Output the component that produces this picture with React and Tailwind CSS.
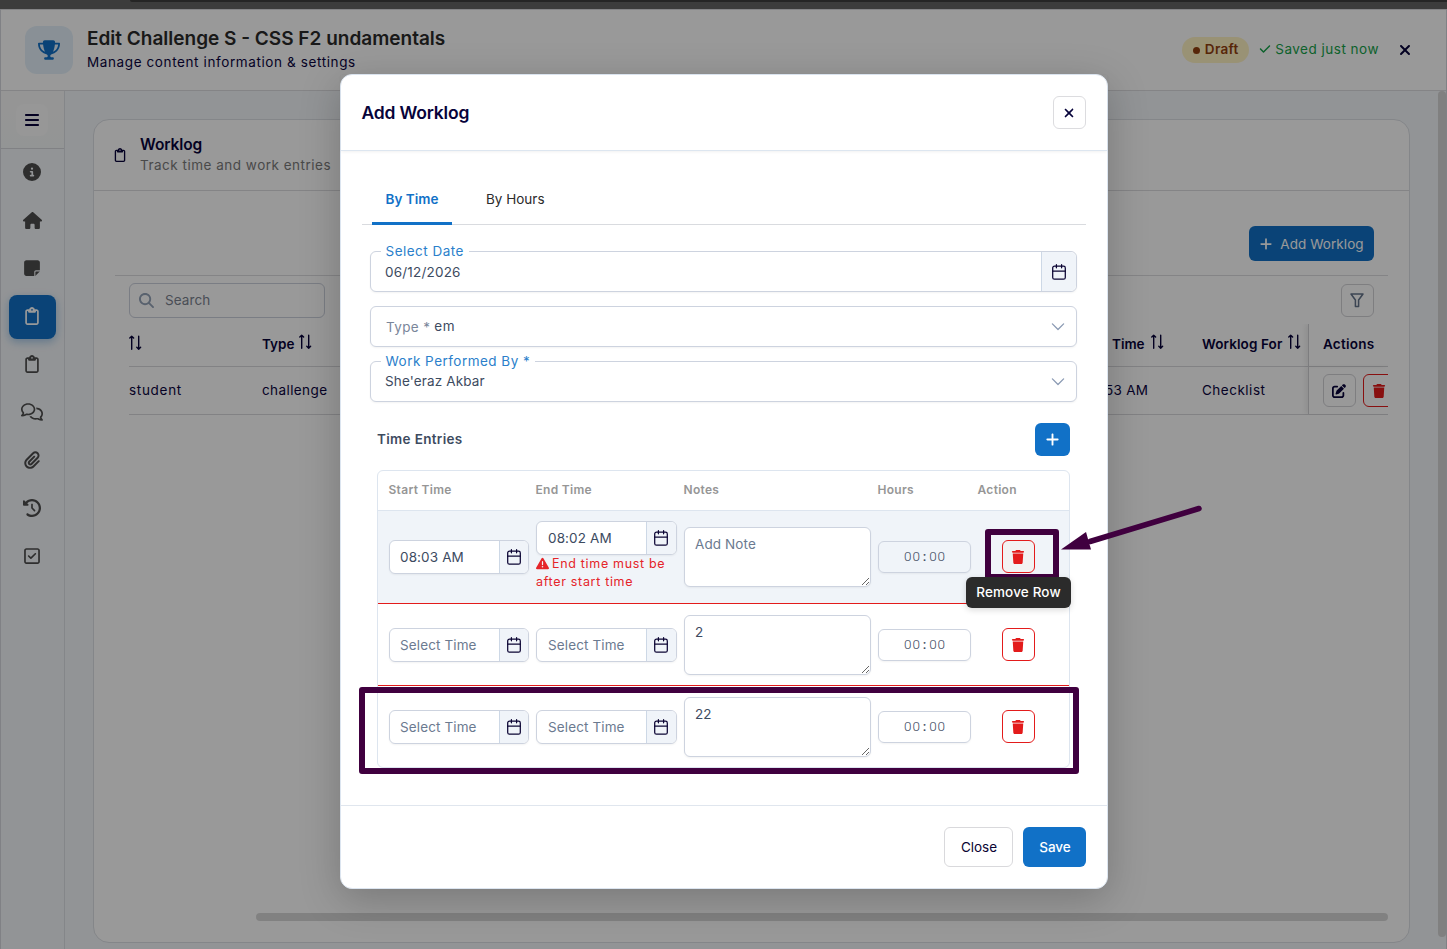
import React from "react";
import {
  FaTrophy, FaBars, FaCircleInfo, FaHouse, FaNoteSticky, FaRegClipboard, FaRegComments, FaPaperclip,
  FaClockRotateLeft, FaRegSquareCheck, FaMagnifyingGlass, FaXmark, FaPlus, FaCheck, FaPenToSquare,
  FaTrash, FaTriangleExclamation,
} from "react-icons/fa6";

function SortIcon({ className = "" }) {
  return (
    <svg className={className} width="14" height="16" viewBox="0 0 14 16" fill="none" stroke="currentColor" strokeWidth="1.4" strokeLinecap="round" strokeLinejoin="round">
      <path d="M2.7 14.2V1.2M0.8 3.1L2.7 1.2L4.6 3.1M9.7 1.2V14.2M7.8 12.3L9.7 14.2L11.6 12.3" />
    </svg>
  );
}

function CalendarIcon() {
  return (
    <svg width="14" height="16" viewBox="0 0 14 16" fill="none" stroke="#0b0433" strokeWidth="1.25" strokeLinecap="round" strokeLinejoin="round">
      <rect x="0.7" y="2.2" width="12.6" height="13" rx="1.8" />
      <path d="M0.7 7H13.3M4.4 0.7V3.8M9.6 0.7V3.8" />
    </svg>
  );
}

function Chevron() {
  return (
    <svg width="14" height="9" viewBox="0 0 14 9" fill="none" stroke="#8a9ab3" strokeWidth="1.3" strokeLinecap="round" strokeLinejoin="round">
      <path d="M1.4 1.9L7 7.5L12.6 1.9" />
    </svg>
  );
}

function FilterIcon() {
  return (
    <svg className="mr-px" width="14" height="15" viewBox="0 0 14 15" fill="none" stroke="#64748b" strokeWidth="1.5" strokeLinejoin="round">
      <path d="M1 1H13L8.6 7V13.6H5.4V7Z" />
    </svg>
  );
}

const navItems = [
  { icon: FaCircleInfo, size: 18 },
  { icon: FaHouse, size: 19 },
  { icon: FaNoteSticky, size: 18 },
  { icon: FaRegClipboard, size: 18, active: true },
  { icon: FaRegClipboard, size: 18 },
  { icon: FaRegComments, size: 22 },
  { icon: FaPaperclip, size: 18 },
  { icon: FaClockRotateLeft, size: 18 },
  { icon: FaRegSquareCheck, size: 18 },
];

function Sidebar() {
  return (
    <aside className="flex w-16 shrink-0 flex-col border-r border-[#dcdfe5]">
      <div className="flex h-[58px] items-center justify-center border-b border-[#d6d8dc] bg-linear-to-b from-[#f9f9f9] to-[#f6f9f8] pr-px">
        <div className="flex size-8 items-center justify-center rounded-lg bg-[#fcfcfc]">
          <FaBars size={16} color="#07033a" />
        </div>
      </div>
      <nav className="flex flex-col items-center gap-1 pt-[2px]">
        {navItems.map(({ icon: Icon, size, active }, i) => (
          <div
            key={i}
            className={
              active
                ? "flex h-11 w-[47px] items-center justify-center rounded-lg bg-[#1171c7] pr-px pb-[2px] text-white shadow-[0_3px_8px_rgba(17,113,199,0.35)]"
                : "flex h-11 w-[47px] items-center justify-center pr-px pb-[2px] text-[#4d4d4d]"
            }
          >
            <Icon size={size} />
          </div>
        ))}
      </nav>
    </aside>
  );
}

function Header() {
  return (
    <header className="flex h-[82px] shrink-0 items-center border-y border-[#dcdcdf] bg-white pr-[33px] pl-6">
      <div className="flex size-12 items-center justify-center rounded-xl bg-[#e4f1fb] pb-px">
        <FaTrophy size={22} color="#1171c7" />
      </div>
      <div className="ml-[14px] whitespace-nowrap">
        <h1 className="text-[19px] leading-[23px] font-semibold text-[#2b2b2b]">Edit Challenge S - CSS F2 undamentals</h1>
        <p className="text-[13.5px] leading-6 tracking-[0.61px] text-[#0b0440]">Manage content information &amp; settings</p>
      </div>
      <div className="ml-auto flex items-center whitespace-nowrap">
        <span className="flex h-[26px] w-[67px] items-center justify-center gap-[5px] rounded-full bg-[#fff3c4] pb-px text-[13.5px] font-semibold tracking-[0.3px] text-[#92400e]">
          <span className="mt-[2px] size-[7px] rounded-full bg-[#92400e]" />
          Draft
        </span>
        <span className="ml-[10px] flex items-center gap-1 pb-[2px] text-[13.5px] tracking-[0.5px] text-[#16a34a]">
          <FaCheck size={12} />
          Saved just now
        </span>
        <FaXmark className="ml-[18px]" size={16} color="#07033a" />
      </div>
    </header>
  );
}

function WorklogCard() {
  return (
    <section className="mt-7 ml-7 flex h-[824px] w-[1317px] flex-col rounded-2xl border border-[#dcdfe5] bg-white text-[13.5px]">
      <div className="flex h-[71px] items-center border-b border-[#dcdcdf] pl-[19px] whitespace-nowrap">
        <FaRegClipboard size={14} color="#07033a" />
        <div className="ml-[13px]">
          <h2 className="text-[15.5px] leading-5 font-semibold tracking-[-0.1px] text-[#07033a]">Worklog</h2>
          <p className="leading-[21px] tracking-[0.5px] text-[#7b7b7b]">Track time and work entries</p>
        </div>
      </div>
      <div className="mx-[21px] flex h-[85px] items-end justify-end border-b border-[#dcdcdf] pr-[14px] pb-[14px]">
        <button className="flex h-[35px] w-[125px] items-center justify-center gap-[7px] rounded-md bg-[#1171c7] pt-px tracking-[0.05px] whitespace-nowrap text-white">
          <FaPlus size={14} />
          Add Worklog
        </button>
      </div>
      <div className="mt-[7px] mr-[35px] ml-[35px] flex items-center justify-between">
        <div className="flex h-[35px] w-[196px] items-center gap-[11px] rounded-md border border-[#cbd0dc] pl-[9px] tracking-[0.1px] text-[#7b8290]">
          <FaMagnifyingGlass size={15} color="#94a3b8" />
          Search
        </div>
        <button className="flex size-[33px] items-center justify-center rounded-md border border-[#d2d2d6]">
          <FilterIcon />
        </button>
      </div>
      <div className="mt-[6px] mr-[21px] ml-[35px] overflow-hidden whitespace-nowrap text-[#0b0440]">
        <div className="grid h-[43px] grid-cols-[133px_843px_97px_106px_1fr] border-b border-[#d9d9dc] font-semibold text-[#07033a]">
          <div className="flex items-center pb-[5px]"><SortIcon /></div>
          <div className="flex items-center gap-[5px] pb-[2px]">Type <SortIcon className="-mt-[4px]" /></div>
          <div className="flex items-center gap-[6px] pb-[2px] pl-[7px]">Time <SortIcon className="-mt-[4px]" /></div>
          <div className="flex items-center gap-[6px] pb-[2px] tracking-[0.1px]">Worklog For <SortIcon className="-mt-[4px]" /></div>
          <div className="flex items-center border-l border-[#d0d0d4] pb-[2px] pl-[14px] tracking-[0.25px] shadow-[-3px_0_4px_rgba(0,0,0,0.06)]">Actions</div>
        </div>
        <div className="grid h-12 grid-cols-[133px_843px_97px_106px_1fr] border-b border-[#d9d9dc] tracking-[0.5px]">
          <div className="flex items-center tracking-[0.7px]">student</div>
          <div className="flex items-center tracking-[0.4px]">challenge</div>
          <div className="flex items-center tracking-[0.3px]">53 AM</div>
          <div className="flex items-center">Checklist</div>
          <div className="flex items-center gap-[7px] border-l border-[#d0d0d4] pl-[14px] shadow-[-3px_0_4px_rgba(0,0,0,0.06)]">
            <span className="flex size-[33px] shrink-0 items-center justify-center rounded-md border border-[#d2d2d6] pr-px">
              <FaPenToSquare size={14} color="#07033a" />
            </span>
            <span className="flex size-[33px] shrink-0 items-center justify-center rounded-md border border-[#e31b1b] pr-px">
              <FaTrash size={14} color="#e31b1b" />
            </span>
          </div>
        </div>
      </div>
      <div className="mt-auto mr-[21px] mb-[21px] ml-[162px] h-2 rounded-full bg-[#d8d8d8]" />
    </section>
  );
}

function Field({ label, children, addon }) {
  return (
    <div className="relative flex h-[41px] items-stretch rounded-md border border-[#cdd3df] bg-white shadow-[0_1px_2px_rgba(18,18,23,0.05)]">
      {label && (
        <span className="absolute -top-[11px] left-[10px] bg-white pr-[5px] pl-[4.5px] text-[13.5px] leading-[21px] tracking-[0.48px] whitespace-nowrap text-[#2b7fcb]">{label}</span>
      )}
      <div className="flex flex-1 items-center pl-[14px]">{children}</div>
      {addon}
    </div>
  );
}

function TimeInput({ value, placeholder, wide }) {
  return (
    <div className="flex h-[34px] w-full overflow-hidden rounded-md border border-[#cdd3df] bg-white shadow-[0_1px_2px_rgba(18,18,23,0.05)]">
      <span
        className={
          "flex flex-1 items-center tracking-[0.12px] " +
          (wide ? "pl-[11px] " : "pl-[10px] ") +
          (value ? "text-[#3d4b5f]" : "pt-[2px] text-[#6b7a90]")
        }
      >
        {value || placeholder}
      </span>
      <span className={(wide ? "w-[30px] pr-px " : "w-[29px] ") + "flex items-center justify-center border-l border-[#cdd8e6] bg-[#f0f4f9]"}>
        <CalendarIcon />
      </span>
    </div>
  );
}

function EntryRow({ start, end, error, note, className, shaded }) {
  return (
    <div className={"grid grid-cols-[140px_141px_187px_93px_1fr] items-center gap-[7px] pl-[11px] whitespace-nowrap " + className}>
      <TimeInput value={start} placeholder="Select Time" />
      <div>
        <TimeInput value={end} placeholder="Select Time" wide />
        {error && (
          <p className="pb-[2px] text-[12.5px] leading-[18px] tracking-[0.68px] text-[#e5252a]">
            <FaTriangleExclamation className="mr-[3px] mb-[3px] inline" size={13} />
            End time must be<br />after start time
          </p>
        )}
      </div>
      <textarea
        className="block h-[60px] w-full resize rounded-md border border-[#cdd3df] bg-white px-[10px] py-[6px] leading-[21px] tracking-[0.1px] text-[#3d4b5f] shadow-[0_1px_2px_rgba(18,18,23,0.05)] placeholder:text-[#6b7a90]"
        placeholder="Add Note"
        defaultValue={note}
      />
      <div className="flex h-8 items-center justify-center rounded-md border border-[#cdd3df] pb-px pl-px font-[Roboto,sans-serif] text-[13.5px] font-light tracking-[0.85px] text-[#3d4b5f] shadow-[0_1px_2px_rgba(18,18,23,0.05)]">
        <span>00</span>
        <span className="w-[8.4px] text-center font-medium">:</span>
        <span>00</span>
      </div>
      <span className={"ml-6 flex size-[33px] items-center justify-center rounded-md border border-[#e31b1b] pr-px " + (shaded ? "-mt-px bg-[#f2f2f2]" : "bg-white")}>
        <FaTrash size={14} color="#e31b1b" />
      </span>
    </div>
  );
}

function Modal() {
  return (
    <div className="absolute top-[74px] left-[340px] flex h-[815px] w-[768px] flex-col rounded-xl border border-[#dce5f0] bg-white text-[13.5px] shadow-[0_10px_40px_rgba(0,0,0,0.22)]">
      <div className="flex h-[76px] shrink-0 items-center justify-between border-b border-[#dde6f0] pr-[21px] pl-[20.5px] shadow-[0_1px_3px_rgba(0,0,0,0.06)]">
        <h2 className="pt-[2px] text-[17.5px] font-semibold tracking-[-0.18px] whitespace-nowrap text-[#07033a]">Add Worklog</h2>
        <button className="flex size-[33px] items-center justify-center rounded-md border border-[#dcdcdf] pr-px">
          <FaXmark size={14} color="#07033a" />
        </button>
      </div>
      <div className="px-[21px] pt-[23px]">
        <div className="flex h-[51px] gap-5 border-b border-[#d9dbdf] pl-[10px] whitespace-nowrap">
          <div className="-mb-px flex w-20 items-center justify-center rounded-t-[2px] border-b-[3px] border-[#1171c7] pt-[2px] font-semibold text-[#1171c7]">By Time</div>
          <div className="flex items-center px-[14px] text-[#2b2b2b]">By Hours</div>
        </div>
      </div>
      <div className="mt-[26px] mr-[30px] ml-[29px] flex flex-col gap-[14px] whitespace-nowrap text-[#3d4b5f]">
        <Field
          label="Select Date"
          addon={
            <span className="flex w-[35px] items-center justify-center rounded-r-md border-l border-[#cdd8e6] bg-[#f0f4f9]">
              <CalendarIcon />
            </span>
          }
        >
          <span className="pt-[2px] tracking-[0.2px]">06/12/2026</span>
        </Field>
        <Field addon={<span className="mr-[11px] flex items-center"><Chevron /></span>}>
          <span className="pt-px pl-px tracking-[0.35px] text-[#7a869a]">Type *</span>
          <span className="ml-1 tracking-[0.6px]">em</span>
        </Field>
        <Field label="Work Performed By *" addon={<span className="mr-[11px] flex items-center"><Chevron /></span>}>
          <span className="tracking-[0.15px]">She'eraz Akbar</span>
        </Field>
      </div>
      <div className="mr-[37px] ml-9 mt-[21px] flex h-[33px] items-center justify-between">
        <h3 className="font-semibold tracking-[0.33px] whitespace-nowrap text-[#3d4b5f]">Time Entries</h3>
        <button className="flex h-[33px] w-[35px] items-center justify-center rounded-md bg-[#1171c7] text-white">
          <FaPlus size={15} />
        </button>
      </div>
      <div className="mt-[14px] mr-[37px] ml-9 overflow-hidden rounded-md border border-[#dde5ef]">
        <div className="grid h-10 grid-cols-[140px_141px_187px_93px_1fr] items-center gap-[7px] border-b border-[#dde5ef] pb-[2px] pl-[10.5px] text-[12px] font-semibold tracking-[0.3px] whitespace-nowrap text-[#969696]">
          <span>Start Time</span>
          <span>End Time</span>
          <span>Notes</span>
          <span>Hours</span>
          <span>Action</span>
        </div>
        <EntryRow start="08:03 AM" end="08:02 AM" error shaded className="h-[93px] border-b border-[#e31b1b] bg-[#f0f4f9]" />
        <EntryRow note="2" className="h-[82px] border-b border-[#e31b1b]" />
        <EntryRow note="22" className="h-[81px]" />
      </div>
      <div className="mt-auto flex h-[83px] shrink-0 items-center justify-end gap-[10px] border-t border-[#e0e6ee] pr-[21px]">
        <button className="h-10 w-[69px] rounded-md border border-[#d9d9dc] pl-px text-[#0b0433]">Close</button>
        <button className="h-10 w-[63px] rounded-md bg-[#1171c7] pl-px font-medium text-white">Save</button>
      </div>
    </div>
  );
}

function Annotations() {
  return (
    <>
      <div className="absolute top-[687px] left-[358.5px] h-[86.5px] w-[720px] rounded-[3px] border-[6px] border-[#40003f]" />
      <div className="absolute top-[528.5px] left-[984.5px] h-[51px] w-[74.5px] rounded-[3px] border-[6px] border-[#40003f]" />
      <svg className="absolute top-[500px] left-[1055px]" width="150" height="55" viewBox="1055 500 150 55">
        <path d="M1199 508.5L1090 541.5" stroke="#40003f" strokeWidth="5.5" strokeLinecap="round" />
        <path d="M1061 549.5L1086 532L1091 549.5Z" fill="#40003f" />
      </svg>
    </>
  );
}

export default function App() {
  return (
    <div className="relative flex h-[949px] w-[1447px] flex-col overflow-hidden bg-[#f4f7fa] font-[Inter,sans-serif]">
      <div className="h-[9px] shrink-0 bg-[#646464]">
        <div className="ml-[130px] h-[2px] rounded-bl-lg bg-[#3f3f3f]" />
      </div>
      <div className="flex min-h-0 flex-1 flex-col border-x border-[#d5d8de]">
        <Header />
        <div className="flex min-h-0 flex-1">
          <Sidebar />
          <main className="flex min-w-0 flex-1 justify-between">
            <WorklogCard />
            <div className="h-[846px] w-2 rounded-full bg-[#d6d6d6]" />
          </main>
        </div>
      </div>
      <div className="absolute inset-0 bg-black/40" />
      <Modal />
      <Annotations />
      <div className="absolute top-[577px] left-[966px] flex h-[31px] w-[105px] items-center justify-center rounded-md bg-[#2b2b2b] text-[13.5px] font-medium tracking-[0.15px] whitespace-nowrap text-white shadow-[0_2px_6px_rgba(0,0,0,0.15)]">
        Remove Row
      </div>
    </div>
  );
}
